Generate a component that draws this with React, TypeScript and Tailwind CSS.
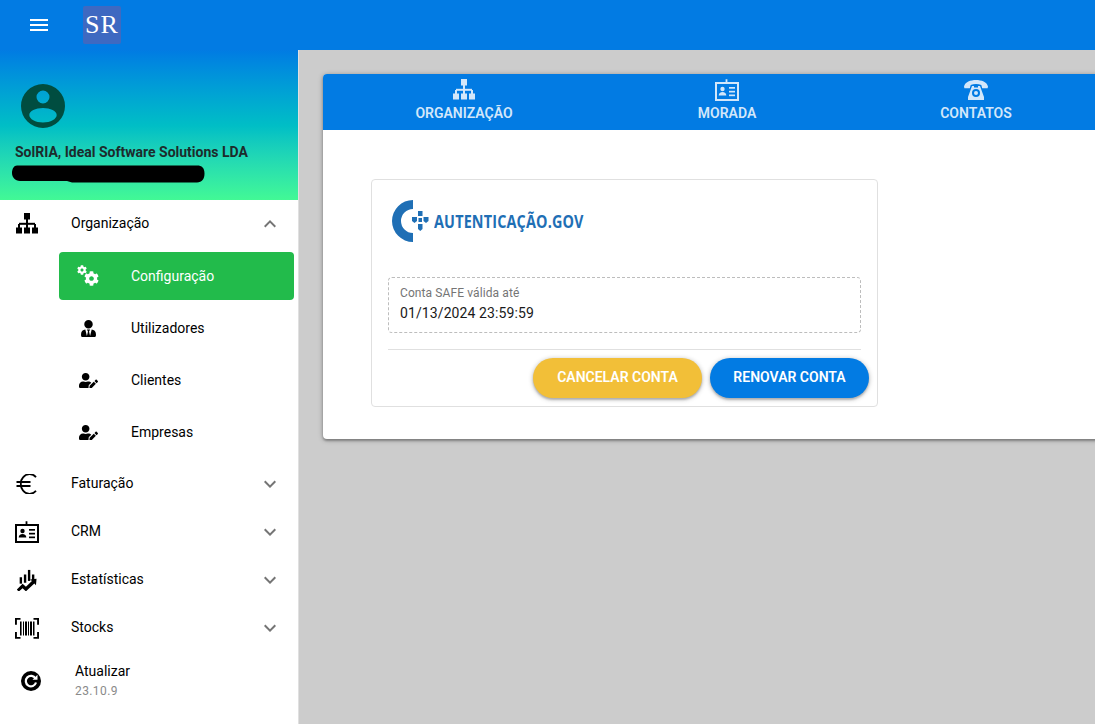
import React from "react";
import { MdMenu, MdExpandMore, MdExpandLess } from "react-icons/md";
import { FaCog, FaUserTie, FaUserEdit } from "react-icons/fa";

function Sitemap({ size = 22 }: { size?: number }) {
  return (
    <svg width={size} height={size} viewBox="0 0 22 22" fill="currentColor">
      <rect x="8" y="0" width="6" height="6.500" />
      <rect x="10" y="6" width="2" height="5" />
      <rect x="3" y="9.800" width="16" height="2" />
      <rect x="2" y="11" width="2" height="4" />
      <rect x="10" y="11" width="2" height="4" />
      <rect x="18" y="11" width="2" height="4" />
      <rect x="0" y="14.500" width="6" height="6" />
      <rect x="8" y="14.500" width="6" height="6" />
      <rect x="16" y="14.500" width="6" height="6" />
    </svg>
  );
}

function Cogs() {
  return (
    <div className="flex h-5 w-[22px] -translate-y-[1px] text-white">
      <FaCog size={10} className="shrink-0" />
      <FaCog size={15} className="-ml-[3px] mt-[6px] shrink-0" />
    </div>
  );
}

function Euro() {
  return (
    <svg width={22} height={20} viewBox="0 0 22 20" fill="none" stroke="#000" strokeWidth="1.800">
      <path d="M20 3.200A8.200 8.200 0 0 0 7 3.500C5.400 5 4.800 7.500 4.800 10s.6 5 2.200 6.500a8.200 8.200 0 0 0 13 .3" />
      <path d="M0.500 8h14M0.500 12h14" />
    </svg>
  );
}

function IdCard({ size = 24, className = "" }: { size?: number; className?: string }) {
  return (
    <svg width={size} height={size} viewBox="0 0 24 24" className={className} fill="currentColor">
      <path d="M0 4h10.600V1.200h1.800V4H24v19H0V4zm2 2v15h20V6H2z" fillRule="evenodd" />
      <circle cx="7.500" cy="11" r="2.200" />
      <path d="M3.700 17.500c0-2.200 1.600-3.400 3.800-3.400s3.800 1.200 3.800 3.400H3.700z" />
      <rect x="14" y="9" width="6" height="1.700" />
      <rect x="14" y="12.800" width="6" height="1.700" />
      <rect x="14" y="16.500" width="6" height="1.700" />
    </svg>
  );
}

function ChartIcon({ size = 22 }: { size?: number }) {
  return (
    <svg width={size} height={size} viewBox="0 0 24 24" fill="currentColor">
      <rect x="4" y="9" width="2.600" height="7" />
      <rect x="8.600" y="6" width="2.600" height="9" />
      <rect x="13" y="1" width="2.600" height="12" />
      <rect x="17.400" y="6" width="2.600" height="7" />
      <path d="M1 22.400l6.200-6.400 3.600 3.400 6.600-6.400-2-1.600 7-.8-.6 7-1.800-1.800-9.200 8.600-3.600-3.400-4.400 3.800z" />
    </svg>
  );
}

function BarcodeIcon({ size = 24 }: { size?: number }) {
  return (
    <svg width={size} height={size} viewBox="0 0 24 24" fill="currentColor">
      <path d="M0 2h5.500v1.800H1.900v5H0V2zM18.500 2H24v6.800h-1.900v-5h-3.600V2zM0 16h1.900v5h3.600v1.800H0V16zM22.100 16H24v6.800h-5.500V21h3.600v-5z" />
      <rect x="5" y="5.500" width="1.600" height="14" />
      <rect x="8" y="5.500" width="1" height="14" />
      <rect x="10" y="5.500" width="2" height="14" />
      <rect x="13" y="5.500" width="1" height="14" />
      <rect x="15" y="5.500" width="2" height="14" />
      <rect x="18" y="5.500" width="1.500" height="14" />
    </svg>
  );
}

function RefreshIcon() {
  return (
    <svg width={20} height={20} viewBox="0 0 20 20">
      <circle cx="10" cy="10" r="10" fill="#000" />
      <path d="M14.500 7.500A5.200 5.200 0 1 0 15 11.500" fill="none" stroke="#fff" strokeWidth="2.200" />
      <path d="M11.500 8.800h5v-5z" fill="#fff" />
    </svg>
  );
}

function PhoneIcon() {
  return (
    <svg width={24} height={20} viewBox="0 0 24 20" fill="currentColor">
      <path d="M0 6.500C1 2 6.500 0 12 0s11 2 12 6.500l-.4 1.800h-5.400l-.9-3.200c-1.600-.7-3.400-1-5.300-1s-3.700.3-5.300 1l-.9 3.200H.4L0 6.500z" />
      <path fillRule="evenodd" d="M8 6h2v1.500h4V6h2l4 11v3H4v-3L8 6zm4 3a4 4 0 1 0 0 8 4 4 0 0 0 0-8zm0 2a2 2 0 1 1 0 4 2 2 0 0 1 0-4z" />
    </svg>
  );
}

function Avatar() {
  return (
    <svg width={44} height={44} viewBox="0 0 44 44" fill="#004d40">
      <path
        fillRule="evenodd"
        d="M22 0a22 22 0 1 1 0 44a22 22 0 0 1 0-44zm0 6.500a6.500 6.500 0 1 0 0 13a6.500 6.500 0 0 0 0-13zm0 17.500c-7.500 0-13.700 3-13.700 7s6.200 7.500 13.700 7.500s13.700-3.500 13.700-7.500s-6.200-7-13.700-7z"
      />
    </svg>
  );
}

function AutenticacaoLogo() {
  return (
    <div className="flex h-[42px] items-center">
      <svg width={40} height={42} viewBox="0 0 40 42" className="shrink-0" fill="#1f6fb5">
        <path d="M21 0A21 21 0 0 0 21 42V33A12 12 0 0 1 21 9z" />
        <rect x="26" y="11" width="4.500" height="5" />
        <path d="M20 17h5v4l-2.500 2l-2.500-2z" />
        <rect x="26.500" y="18" width="3.500" height="4" />
        <path d="M31.500 17h5v4l-2.500 2l-2.500-2z" />
        <path d="M26 24h4.500v5l-2.250 2l-2.250-2z" />
      </svg>
      <span className="ml-[2px] w-[150px] shrink-0 origin-left scale-x-[0.8] whitespace-nowrap font-['Open_Sans',sans-serif] text-[18px] font-bold tracking-[0.2px] text-[#1f6fb5]">
        AUTENTICAÇÃO.GOV
      </span>
    </div>
  );
}

function Row({ icon, label, open }: { icon: React.ReactNode; label: string; open?: boolean }) {
  return (
    <div className="flex h-12 items-center pl-[15px] pr-[16px] text-[14px] text-black">
      <div className="flex w-6 justify-center">{icon}</div>
      <span className="ml-8 flex-1 pb-[2px]">{label}</span>
      {open ? (
        <MdExpandLess size={24} className="text-[#757575]" />
      ) : (
        <MdExpandMore size={24} className="text-[#757575]" />
      )}
    </div>
  );
}

function SubRow({ icon, label, active }: { icon: React.ReactNode; label: string; active?: boolean }) {
  return (
    <div
      className={`mb-1 ml-[59px] mr-1 flex h-12 items-center rounded pl-[17px] text-[14px] ${
        active ? "bg-[#22bb4b] text-white" : "text-black"
      }`}
    >
      <div className="flex w-6 justify-center">{icon}</div>
      <span className="ml-[31px]">{label}</span>
    </div>
  );
}

function Tab({ icon, label, width }: { icon: React.ReactNode; label: string; width: string }) {
  return (
    <div className={`flex h-14 shrink-0 flex-col items-center pt-1 text-[#d3e7fa] ${width}`}>
      <div className="flex h-6 items-center justify-center">{icon}</div>
      <span className="mt-[1px] text-[14px] font-semibold leading-5">{label}</span>
    </div>
  );
}

export default function App() {
  return (
    <div className="flex h-[724px] w-[1095px] flex-col overflow-hidden bg-[#cccccc] font-['Roboto',sans-serif]">
      <header className="flex h-[50px] shrink-0 items-center bg-[#027be3]">
        <MdMenu size={24} className="ml-[27px] text-white" />
        <div className="ml-[32px] flex h-[38px] w-[38px] items-center justify-center rounded-[2px] bg-[#3e69c1] font-['Liberation_Serif',serif] text-[26px] leading-none tracking-[1px] text-white">
          SR
        </div>
      </header>
      <div className="flex min-h-0 flex-1">
        <aside className="flex w-[299px] shrink-0 flex-col border-r border-[#e0e0e0] bg-white">
          <div className="flex h-[150px] shrink-0 flex-col bg-gradient-to-b from-[#027be3] to-[#42f995] pl-[15px]">
            <div className="ml-[6px] mt-[34px]">
              <Avatar />
            </div>
            <div className="mt-[14px] text-[14px] font-bold leading-5 text-[#1d2b2b]">
              SolRIA, Ideal Software Solutions LDA
            </div>
            <svg width={193} height={19} viewBox="0 0 193 19" className="-ml-[3px] mt-[3px] shrink-0">
              <path d="M5 0.500H185C190 0.500 192.500 3 192.500 8.500S190 17.500 185 17.500H60L55 16H8C3 16 0 12 0 8S2 0.500 5 0.500z" fill="#000" />
            </svg>
          </div>
          <Row icon={<Sitemap size={22} />} label="Organização" open />
          <div className="pt-1">
            <SubRow icon={<Cogs />} label="Configuração" active />
            <SubRow icon={<FaUserTie size={17} />} label="Utilizadores" />
            <SubRow icon={<FaUserEdit size={19} />} label="Clientes" />
            <SubRow icon={<FaUserEdit size={19} />} label="Empresas" />
          </div>
          <Row icon={<Euro />} label="Faturação" />
          <Row icon={<IdCard size={24} />} label="CRM" />
          <Row icon={<ChartIcon size={22} />} label="Estatísticas" />
          <Row icon={<BarcodeIcon size={24} />} label="Stocks" />
          <div className="flex h-[52px] items-center pl-[21px] pt-[6px]">
            <RefreshIcon />
            <div className="ml-[34px]">
              <div className="text-[14px] leading-5 text-black">Atualizar</div>
              <div className="text-[12px] leading-5 tracking-[0.4px] text-[#8a8a8a]">23.10.9</div>
            </div>
          </div>
        </aside>
        <main className="min-w-0 flex-1 pl-6 pt-6">
          <div className="h-[365px] w-[820px] overflow-hidden rounded bg-white shadow-[0_1px_5px_rgba(0,0,0,0.35),0_2px_2px_rgba(0,0,0,0.2)]">
            <div className="flex h-14 bg-[#027be3]">
              <Tab icon={<Sitemap size={22} />} label="ORGANIZAÇÃO" width="w-[282px]" />
              <Tab icon={<IdCard size={24} />} label="MORADA" width="w-[244px]" />
              <Tab icon={<PhoneIcon />} label="CONTATOS" width="w-[254px]" />
            </div>
            <div className="ml-[48px] mt-[49px] h-[228px] w-[507px] rounded border border-[#e0e0e0] px-4 pt-[20px]">
              <div className="ml-[4px]">
                <AutenticacaoLogo />
              </div>
              <div className="mt-[35px] h-[56px] w-[473px] rounded border border-dashed border-[#bdbdbd] px-[11px] pt-[8px]">
                <div className="text-[12px] leading-[15px] tracking-[0.1px] text-[#757575]">Conta SAFE válida até</div>
                <div className="mt-[2px] text-[14px] leading-5 tracking-[0.1px] text-[#1a1a1a]">01/13/2024 23:59:59</div>
              </div>
              <div className="mt-4 h-px w-[473px] bg-[#e0e0e0]" />
              <div className="mt-2 flex w-[481px] justify-end gap-2">
                <button className="h-10 w-[169px] rounded-full bg-[#f2bf38] pb-px text-[14px] font-semibold text-white shadow-[0_1px_5px_rgba(0,0,0,0.3),0_2px_2px_rgba(0,0,0,0.16)]">
                  CANCELAR CONTA
                </button>
                <button className="h-10 w-[159px] rounded-full bg-[#027be3] pb-px text-[14px] font-semibold text-white shadow-[0_1px_5px_rgba(0,0,0,0.3),0_2px_2px_rgba(0,0,0,0.16)]">
                  RENOVAR CONTA
                </button>
              </div>
            </div>
          </div>
        </main>
      </div>
    </div>
  );
}
